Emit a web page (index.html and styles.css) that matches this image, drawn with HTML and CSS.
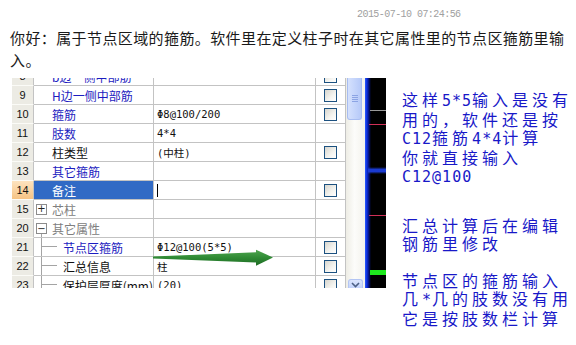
FILE: index.html
```html
<!DOCTYPE html>
<html lang="zh-CN">
<head>
  <meta charset="UTF-8">
  <meta name="viewport" content="width=device-width, initial-scale=1.0">
  <title>节点区箍筋</title>
  <link rel="stylesheet" href="styles.css">
</head>

<body>
  <div class="stamp">2015-07-10 07:24:56</div>
  <p class="intro">你好：属于节点区域的箍筋。软件里在定义柱子时在其它属性里的节点区箍筋里输入。</p>

  <div class="main">
    <div class="shot">
      <div class="grid">
        <div class="rows">
          <div class="row">
            <div class="num">8</div>
            <div class="name blue">b边一侧中部筋</div>
            <div class="val"></div>
            <div class="chk"><span class="cb"></span></div>
          </div>
          <div class="row">
            <div class="num">9</div>
            <div class="name blue">H边一侧中部筋</div>
            <div class="val"></div>
            <div class="chk"><span class="cb"></span></div>
          </div>
          <div class="row">
            <div class="num">10</div>
            <div class="name blue">箍筋</div>
            <div class="val">Φ8@100/200</div>
            <div class="chk"><span class="cb"></span></div>
          </div>
          <div class="row">
            <div class="num">11</div>
            <div class="name blue">肢数</div>
            <div class="val">4*4</div>
            <div class="chk"></div>
          </div>
          <div class="row">
            <div class="num">12</div>
            <div class="name">柱类型</div>
            <div class="val">(中柱)</div>
            <div class="chk"><span class="cb"></span></div>
          </div>
          <div class="row">
            <div class="num">13</div>
            <div class="name blue">其它箍筋</div>
            <div class="val"></div>
            <div class="chk"></div>
          </div>
          <div class="row">
            <div class="num current">14</div>
            <div class="name selected">备注</div>
            <div class="val"><span class="caret"></span></div>
            <div class="chk"><span class="cb"></span></div>
          </div>
          <div class="row">
            <div class="num">15</div>
            <div class="name group">
              <div class="node"><span class="toggle">+</span></div>
              <span>芯柱</span>
            </div>
            <div class="val"></div>
            <div class="chk"></div>
          </div>
          <div class="row">
            <div class="num">20</div>
            <div class="name group">
              <div class="node open"><span class="pad"></span><span class="toggle">−</span><span class="stem"></span></div>
              <span>其它属性</span>
            </div>
            <div class="val"></div>
            <div class="chk"></div>
          </div>
          <div class="row">
            <div class="num">21</div>
            <div class="name leaf blue"><span class="branch"></span><span>节点区箍筋</span></div>
            <div class="val">Φ12@100(5*5)</div>
            <div class="chk"><span class="cb"></span></div>
          </div>
          <div class="row">
            <div class="num">22</div>
            <div class="name leaf"><span class="branch"></span><span>汇总信息</span></div>
            <div class="val">柱</div>
            <div class="chk"><span class="cb"></span></div>
          </div>
          <div class="row">
            <div class="num">23</div>
            <div class="name leaf"><span class="branch"></span><span>保护层厚度(mm)</span></div>
            <div class="val">(20)</div>
            <div class="chk"><span class="cb"></span></div>
          </div>
        </div>
      </div>

      <div class="vscroll">
        <div class="thumb"><span class="grip"></span></div>
        <div class="down">
          <svg width="9" height="6" viewBox="0 0 9 6"><path d="M1 1 L4.5 4.5 L8 1" fill="none" stroke="#4d6185" stroke-width="1.6"/></svg>
        </div>
      </div>

      <div class="strip"></div>

      <svg class="arrow" width="374" height="210" viewBox="0 0 374 210">
        <defs>
          <linearGradient id="g" x1="0" y1="0" x2="0" y2="1">
            <stop offset="0" stop-color="#4fa54f"/>
            <stop offset="0.5" stop-color="#2f8a34"/>
            <stop offset="1" stop-color="#1e6a24"/>
          </linearGradient>
        </defs>
        <polygon points="141,178.6 244,174.2 244,171.8 261,179.4 244,187.8 244,184.4 141,180.4" fill="url(#g)"/>
      </svg>
    </div>

    <div class="note">
      <p>这样<span class="ab">5*5</span>输入是没有<br>用的，软件还是按<br><span class="ab">C12</span>箍筋<span class="ab">4*4</span>计算<br>你就直接输入<br><span class="ab">C12@100</span></p>
      <p class="second">汇总计算后在编辑<br>钢筋里修改</p>
      <p class="third">节点区的箍筋输入<br>几<span class="ab">*</span>几的肢数没有用<br>它是按肢数栏计算</p>
    </div>
  </div>
</body>
</html>
```

FILE: styles.css
```css
body {
  margin: 0;
  background: #fff;
  font-family: "Noto Sans CJK SC", "Noto Sans", sans-serif;
  color: #111;
}

.stamp {
  padding: 9px 0 0 357px;
  height: 12px;
  font-family: "Liberation Mono", monospace;
  font-size: 10px;
  letter-spacing: -0.55px;
  line-height: 12px;
  color: #a0a0a0;
}

.intro {
  margin: 6px 0 0;
  padding: 0 6px 0 10px;
  font-size: 15px;
  letter-spacing: 0.4px;
  line-height: 22px;
  color: #1a1a1a;
}

.main {
  display: flex;
  align-items: flex-start;
  margin-top: 7px;
}

/* screenshot of the property grid */
.shot {
  position: relative;
  display: flex;
  margin-left: 12px;
  height: 210px;
}

.grid {
  width: 334px;
  height: 210px;
  overflow: hidden;
  background: #fff;
}

.rows {
  margin-top: -11px;
}

.row {
  display: grid;
  grid-template-columns: 22px 120px 162px 30px;
  height: 19px;
  font-size: 12px;
}

.row > div {
  box-sizing: border-box;
  display: flex;
  align-items: center;
  border-right: 1px solid #c3c3c3;
  border-bottom: 1px solid #c3c3c3;
  white-space: nowrap;
  overflow: hidden;
}

.row > .num {
  justify-content: center;
  background: #ecebe4;
  border-bottom-color: #fbfbf7;
  font-family: "Liberation Sans", sans-serif;
  font-size: 11px;
  color: #111;
}

.row > .num.current {
  background: linear-gradient(#fde3bf, #f6c384);
}

.row > .name {
  padding-left: 18px;
}

.blue {
  color: #1c1cc0;
}

.row > .name.selected {
  background: #316ac5;
  color: #fff;
}

.row > .name.group {
  padding-left: 2px;
  color: #808080;
  align-items: stretch;
}

.group > span {
  align-self: center;
  margin-left: 5px;
}

.node {
  display: flex;
  flex-direction: column;
  justify-content: center;
  width: 11px;
}

.node.open {
  justify-content: flex-start;
}

.pad {
  height: 4px;
}

.toggle {
  box-sizing: border-box;
  display: flex;
  align-items: center;
  justify-content: center;
  width: 11px;
  height: 11px;
  border: 1px solid #8c8c8c;
  background: #fff;
  font-family: "DejaVu Sans", sans-serif;
  font-size: 10px;
  line-height: 1;
  color: #222;
}

.stem {
  flex: 1;
  margin-left: 5px;
  border-left: 1px solid #a4a4a4;
}

.row > .name.leaf {
  padding-left: 7px;
  align-items: stretch;
}

.branch {
  width: 16px;
  border-left: 1px solid #a4a4a4;
  background: linear-gradient(#a4a4a4, #a4a4a4) 0 8px / 15px 1px no-repeat;
}

.leaf > span:last-child {
  align-self: center;
  margin-left: 5px;
}

.row > .val {
  padding-left: 3px;
  font-family: "DejaVu Sans Mono", "Noto Sans CJK SC", monospace;
  font-size: 10.5px;
  color: #111;
}

.caret {
  display: inline-block;
  width: 1px;
  height: 13px;
  background: #000;
}

.row > .chk {
  justify-content: center;
}

.cb {
  box-sizing: border-box;
  width: 13px;
  height: 13px;
  border: 1px solid #1c5180;
  background: linear-gradient(135deg, #d6d5ce, #f4f4f0 60%, #fff);
}

/* xp scrollbar */
.vscroll {
  display: flex;
  flex-direction: column;
  justify-content: space-between;
  width: 19px;
  height: 210px;
  background: linear-gradient(to right, #eeede5, #fcfcfa 45%, #f3f2ec);
}

.thumb {
  box-sizing: border-box;
  display: flex;
  align-items: center;
  justify-content: center;
  width: 15px;
  height: 42px;
  margin-left: 1px;
  border: 1px solid #a8bdf1;
  border-top: none;
  border-radius: 0 0 3px 3px;
  background: linear-gradient(to right, #d5e1fd, #c5d5fb 50%, #b6c9f8);
}

.grip {
  width: 6px;
  height: 7px;
  background: repeating-linear-gradient(#8ca4e4 0 1px, transparent 1px 2px);
}

.down {
  box-sizing: border-box;
  display: flex;
  justify-content: center;
  padding-top: 2px;
  width: 15px;
  height: 9px;
  margin-left: 2px;
  border: 1px solid #b3c5f3;
  border-bottom: none;
  border-radius: 3px 3px 0 0;
  background: linear-gradient(#dce6fd, #c3d3fb);
}

/* cut-off monitor strip at the right edge of the picture */
.strip {
  width: 21px;
  height: 210px;
  background:
    linear-gradient(#9a9a9a, #9a9a9a) 5px 32px / 16px 1px no-repeat,
    linear-gradient(#d03058, #d03058) 4px 46px / 17px 1px no-repeat,
    linear-gradient(transparent, #1a3ad0 35%, #1a3ad0 65%, transparent) 3px 89px / 18px 7px no-repeat,
    linear-gradient(#d03058, #d03058) 4px 137px / 17px 1px no-repeat,
    linear-gradient(#1ee81e, #1ee81e) 5px 192px / 16px 5px no-repeat,
    linear-gradient(to right, #2a5cff 0, #0b2bd8 2px, #041070 4px, #000 6px);
}

.arrow {
  position: absolute;
  left: 0;
  top: 0;
  pointer-events: none;
}

/* blue handwritten note */
.note {
  margin-left: 16px;
  padding-top: 12px;
  font-size: 16px;
  letter-spacing: 4px;
  line-height: 18px;
  color: #1818c8;
  white-space: nowrap;
}

.note .ab {
  font-family: "DejaVu Sans Mono", monospace;
  font-size: 15px;
  letter-spacing: 1px;
}

.note p {
  margin: 0;
}

.note .second {
  margin-top: 30px;
}

.note .third {
  margin-top: 19px;
}
```
